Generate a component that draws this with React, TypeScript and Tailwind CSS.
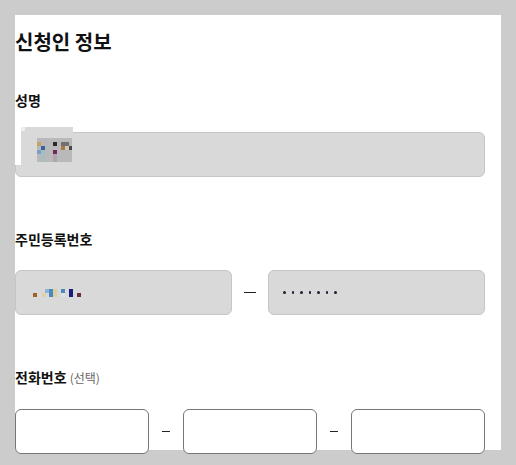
import React from 'react';

const nameBlocks = [
  { x: 0, y: 4, w: 4, h: 4, c: '#c8a060' },
  { x: 4, y: 8, w: 4, h: 4, c: '#3a64a0' },
  { x: 0, y: 12, w: 4, h: 4, c: '#7aa0c8' },
  { x: 4, y: 12, w: 4, h: 12, c: '#a8bcc4' },
  { x: 16, y: 4, w: 4, h: 4, c: '#2a2a2a' },
  { x: 16, y: 12, w: 4, h: 4, c: '#702860' },
  { x: 16, y: 16, w: 4, h: 8, c: '#b0a4b0' },
  { x: 24, y: 4, w: 8, h: 4, c: '#707070' },
  { x: 24, y: 8, w: 4, h: 4, c: '#a87848' },
  { x: 28, y: 8, w: 4, h: 4, c: '#d0c8b8' },
  { x: 32, y: 8, w: 3, h: 4, c: '#484848' },
];

const idBlocks = [
  { x: 0, y: 4, w: 4, h: 4, c: '#a0602a' },
  { x: 9, y: 4, w: 4, h: 4, c: '#ddd3a8' },
  { x: 12, y: 0, w: 4, h: 4, c: '#8ab4d8' },
  { x: 16, y: 0, w: 4, h: 8, c: '#4a8ac0' },
  { x: 20, y: 0, w: 4, h: 8, c: '#ddd0a0' },
  { x: 28, y: 0, w: 4, h: 4, c: '#4a88c0' },
  { x: 28, y: 4, w: 4, h: 4, c: '#dde2e4' },
  { x: 36, y: 0, w: 4, h: 8, c: '#1a1a80' },
  { x: 44, y: 4, w: 4, h: 4, c: '#6a3040' },
];

const Pixels = ({ blocks, w, h, bg }: { blocks: typeof nameBlocks; w: number; h: number; bg?: string }) => (
  <div className="relative shrink-0" style={{ width: w, height: h, background: bg }}>
    {blocks.map((b, i) => (
      <div key={i} className="absolute" style={{ left: b.x, top: b.y, width: b.w, height: b.h, background: b.c }} />
    ))}
  </div>
);

const Dash = ({ wide }: { wide?: boolean }) => (
  <div className="flex items-center justify-center">
    <div className={`h-px bg-[#222] ${wide ? 'w-[12px]' : 'w-[8px]'}`} />
  </div>
);

export default function App() {
  return (
    <div className="min-h-[465px] w-[516px] bg-[#cccccc] pt-[15px] pl-[15px] font-['Noto_Sans_CJK_KR',sans-serif] text-[#111]">
      <div className="h-[435px] w-[486px] bg-white pr-4">
        <h2 className="pt-[13px] text-[20px] font-bold leading-[28px]">신청인 정보</h2>

        <label className="mt-[34px] block text-[14px] font-bold leading-[20px]">성명</label>
        <div className="relative mt-[22px] h-[45px] rounded-[6px] border border-[#c6c6c6] bg-[#d9d9d9]">
          {/* redacted name */}
          <div className="absolute -left-px top-[-6px] flex h-[38px] w-[58px]">
            <div className="w-[6px] bg-white" />
            <div className="relative flex-1 bg-[#d9d9d9]">
              <div className="absolute left-0 top-0 h-[4px] w-[4px] bg-[#eeeeee]" />
              <div className="absolute left-[16px] top-[11px]">
                <Pixels blocks={nameBlocks} w={35} h={24} bg="#b9b9b9" />
              </div>
            </div>
          </div>
        </div>

        <label className="mt-[52px] block text-[14px] font-bold leading-[20px]">주민등록번호</label>
        <div className="mt-[21px] grid h-[45px] grid-cols-[217px_36px_217px]">
          <div className="flex items-center rounded-[6px] border border-[#c6c6c6] bg-[#d9d9d9] pl-[17px]">
            <Pixels blocks={idBlocks} w={48} h={8} />
          </div>
          <Dash wide />
          <div className="flex items-center gap-[6px] rounded-[6px] border border-[#c6c6c6] bg-[#d9d9d9] pl-[14px]">
            {[0, 1, 2, 3, 4, 5, 6].map((i) => (
              <span key={i} className="h-[2.5px] w-[2.5px] rounded-full bg-[#1a2030]" />
            ))}
          </div>
        </div>

        <label className="mt-[52px] block text-[14px] leading-[20px]">
          <span className="font-bold">전화번호</span>{' '}
          <span className="text-[12px] text-[#666]">(선택)</span>
        </label>
        <div className="mt-[21px] grid h-[45px] grid-cols-[134px_34px_134px_34px_134px]">
          <div className="rounded-[6px] border border-[#777] bg-white" />
          <Dash />
          <div className="rounded-[6px] border border-[#777] bg-white" />
          <Dash />
          <div className="rounded-[6px] border border-[#777] bg-white" />
        </div>
      </div>
    </div>
  );
}
